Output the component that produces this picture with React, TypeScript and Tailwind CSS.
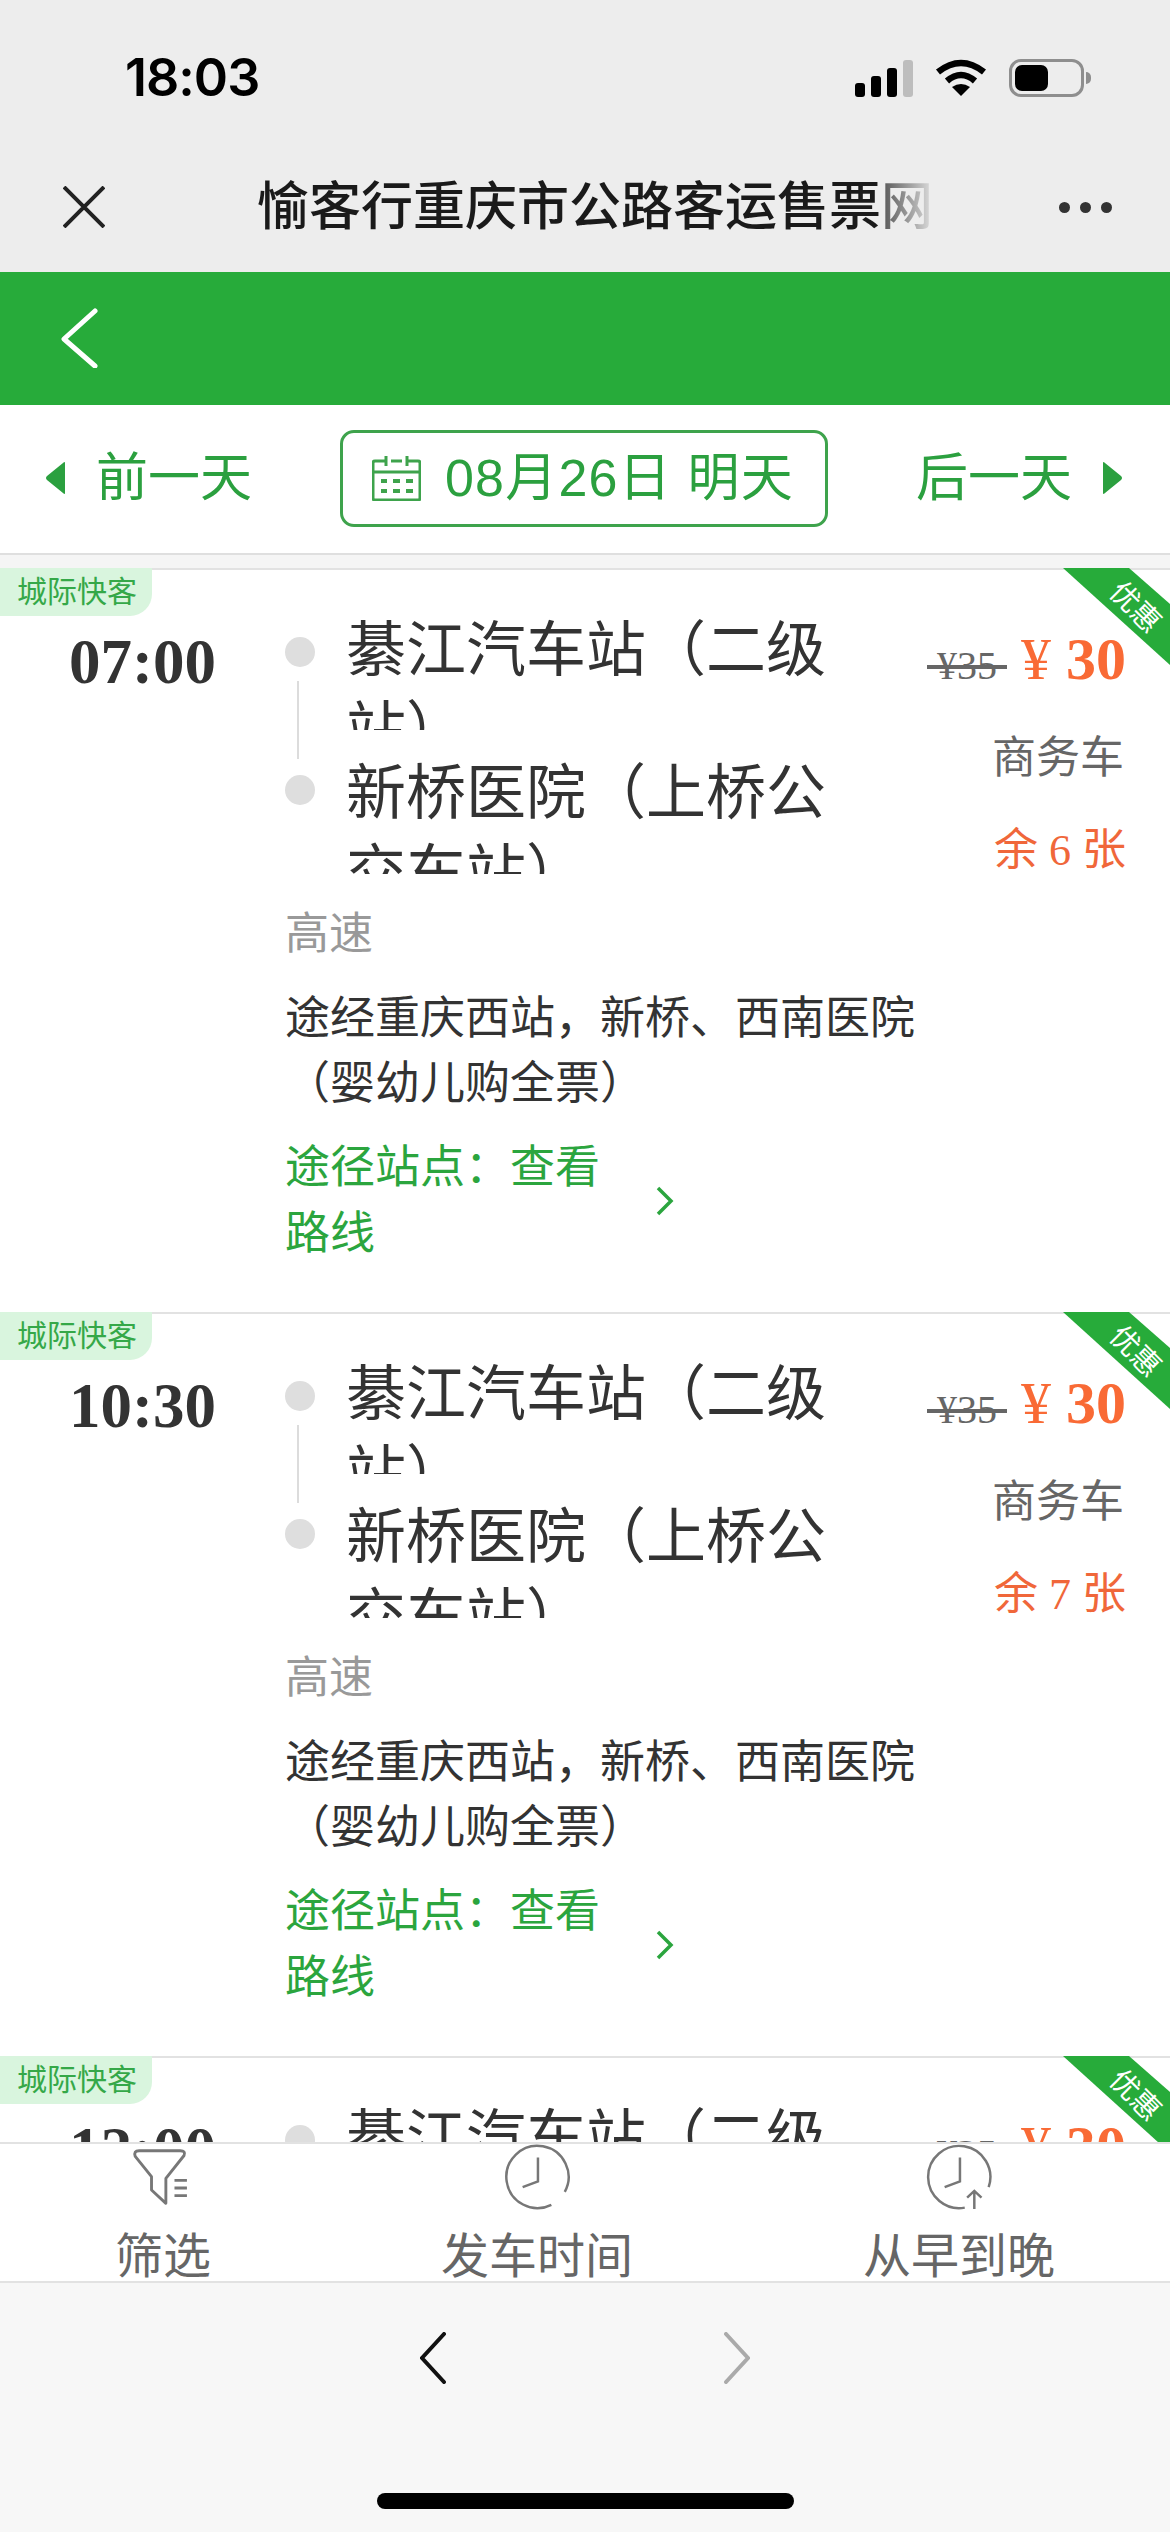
import React from "react";

const SANS = "[font-family:'Liberation_Sans','Noto_Sans_CJK_SC',sans-serif]";

type Trip = { time: string; left: number };

const trips: Trip[] = [
  { time: "07:00", left: 6 },
  { time: "10:30", left: 7 },
  { time: "12:00", left: 5 },
];

const FilterIcon = () => (
  <svg width="70" height="70" viewBox="0 0 70 70" fill="none" stroke="#777" strokeWidth="3">
    <path d="M10 7H53Q59 7 57 12L38 36V62L23 48V34L6 13Q4 7 10 7Z" strokeLinejoin="round" />
    <path d="M47 38H60M47 46H60M47 54H60" />
  </svg>
);

const ClockIcon = () => (
  <svg width="70" height="70" viewBox="0 0 70 70" fill="none" stroke="#777" strokeWidth="2.6">
    <path d="M64 50A32.5 32.5 0 1 0 50 63.5" />
    <path d="M36 14V39L20 45" />
  </svg>
);

const ClockUpIcon = () => (
  <svg width="70" height="70" viewBox="0 0 70 70" fill="none" stroke="#777" strokeWidth="2.6">
    <path d="M66 45A32.5 32.5 0 1 0 41 66.5" />
    <path d="M36 14V39L20 45" />
    <path d="M51 49V68M43.5 56L51 49L58.5 56" />
  </svg>
);

const StatusBar = () => (
  <div className="flex h-[156px] items-center justify-between pl-[125px] pr-[79px]">
    <span className="[font-family:'Inter',sans-serif] text-[52px] font-semibold leading-none tracking-[-1px] text-black">
      18:03
    </span>
    <div className="flex items-center">
      <div className="flex h-[38px] items-end gap-[6px]">
        <div className="h-[14px] w-[10px] rounded-[3px] bg-black" />
        <div className="h-[21px] w-[10px] rounded-[3px] bg-black" />
        <div className="h-[29px] w-[10px] rounded-[3px] bg-black" />
        <div className="h-[37px] w-[10px] rounded-[3px] bg-[#bdbdbd]" />
      </div>
      <svg className="ml-[22px]" width="52" height="38" viewBox="0 0 52 38" fill="none" stroke="#000">
        <path d="M3 13Q26 -5 49 13" strokeWidth="6.5" />
        <path d="M12 22Q26 10 40 22" strokeWidth="6.5" />
        <path d="M26 37L17 28Q26 22 35 28Z" fill="#000" stroke="none" />
      </svg>
      <div className="ml-[22px] h-[38px] w-[75px] rounded-[12px] border-[3px] border-[#8e8e8e] p-[3px]">
        <div className="h-full w-[33px] rounded-[7px] bg-black" />
      </div>
      <div className="ml-[2px] h-[12px] w-[5px] rounded-r-full bg-[#8e8e8e]" />
    </div>
  </div>
);

const NavBar = () => (
  <div className="flex h-[116px] items-center pb-[14px] pl-[63px] pr-[58px]">
    <svg width="42" height="42" viewBox="0 0 42 42" fill="none" stroke="#222" strokeWidth="4">
      <path d="M1 1L41 41M41 1L1 41" />
    </svg>
    <h1 className="ml-[152px] whitespace-nowrap text-[52px] font-medium leading-none text-[#1a1a1a]">
      愉客行重庆市公路客运售票
      <span className="bg-gradient-to-r from-[#555555] to-[#e0e0e0] bg-clip-text text-transparent">网</span>
    </h1>
    <div className="ml-auto flex gap-[10px]">
      <div className="size-[11px] rounded-full bg-[#333]" />
      <div className="size-[11px] rounded-full bg-[#333]" />
      <div className="size-[11px] rounded-full bg-[#333]" />
    </div>
  </div>
);

const GreenHeader = () => (
  <div className="flex h-[133px] items-center bg-[#27ab3a] pb-[2px] pl-[61px]">
    <svg width="38" height="60" viewBox="0 0 38 60" fill="none" stroke="#fff" strokeWidth="5" strokeLinecap="round" strokeLinejoin="round">
      <path d="M34 3L3 31L34 58" />
    </svg>
  </div>
);

const DateBar = () => (
  <div className="flex h-[150px] items-center justify-between border-b-2 border-[#dfdfdf] bg-white pb-[2px] pl-[45px] pr-[47px] text-[52px] leading-none text-[#2ba03f]">
    <div className="flex items-center gap-[30px]">
      <svg width="21" height="34" viewBox="0 0 21 34" fill="#2ba03f">
        <path d="M20 2V32Q20 34 18 32L2 19Q0 17 2 15L18 2Q20 0 20 2Z" />
      </svg>
      <span>前一天</span>
    </div>
    <div className="flex h-[97px] w-[488px] items-center gap-[24px] rounded-[14px] border-[3px] border-[#3ea34c] pl-[29px]">
      <svg width="49" height="46" viewBox="0 0 49 46" fill="none" stroke="#3ea34c" strokeWidth="3">
        <path d="M13 6H3Q1 6 1 8V43Q1 45 3 45H46Q48 45 48 43V8Q48 6 46 6H36M19 6H30" />
        <path d="M14 1V11M35 1V11M1 17H48" />
        <path d="M9 26H15M21 26H28M34 26H41M9 36H15M21 36H28M34 36H41" strokeWidth="4" />
      </svg>
      <span className="whitespace-pre tracking-[1.2px]">08月26日 明天</span>
    </div>
    <div className="flex items-center gap-[30px]">
      <span>后一天</span>
      <svg width="21" height="34" viewBox="0 0 21 34" fill="#2ba03f">
        <path d="M1 2V32Q1 34 3 32L19 19Q21 17 19 15L3 2Q1 0 1 2Z" />
      </svg>
    </div>
  </div>
);

const TripCard = ({ trip }: { trip: Trip }) => (
  <div className="relative h-[744px] border-t-2 border-[#e2e2e2] bg-white">
    <div className="absolute left-0 top-[-2px] flex h-[48px] w-[152px] items-center rounded-br-[22px] bg-[#d9f5de] pl-[17px] text-[30px] leading-none text-[#35a848]">
      城际快客
    </div>
    <svg className="absolute right-0 top-[-2px]" width="107" height="97" viewBox="0 0 107 97" fill="#27ab3a">
      <path d="M0 0H66L107 36V97Z" />
    </svg>
    <span className="absolute right-[6px] top-[23px] rotate-45 text-[29px] leading-none text-white">优惠</span>

    <div className="flex pt-[38px]">
      <div className="w-[285px] pl-[69px] pt-[23px] [font-family:'Liberation_Serif',serif] text-[63px] font-bold leading-[62px] text-[#333]">
        {trip.time}
      </div>

      <div className="w-[600px]">
        <div className="relative flex flex-col gap-[21px]">
          <div className="absolute left-[12px] top-[73px] h-[78px] w-[2px] bg-[#dcdcdc]" />
          <div className="flex">
            <div className="mt-[29px] size-[30px] shrink-0 rounded-full bg-[#dedede]" />
            <div className="ml-[31px] h-[122px] w-[500px] overflow-hidden pt-[3px] text-[60px] leading-[80px] text-[#333]">
              綦江汽车站（二级站）
            </div>
          </div>
          <div className="flex">
            <div className="mt-[24px] size-[30px] shrink-0 rounded-full bg-[#dedede]" />
            <div className="ml-[31px] h-[123px] w-[500px] overflow-hidden pt-[3px] text-[60px] leading-[80px] text-[#333]">
              新桥医院（上桥公交车站）
            </div>
          </div>
        </div>

        <div className="mt-[27px] text-[44px] leading-[66px] text-[#999]">高速</div>
        <div className="mt-[19px] w-[650px] text-[45px] leading-[65px] text-[#333]">
          途经重庆西站，新桥、西南医院（婴幼儿购全票）
        </div>
        <div className="mt-[19px] flex items-center">
          <div className="w-[340px] text-[45px] leading-[66px] text-[#2ba53e]">途径站点：查看路线</div>
          <svg className="ml-[30px]" width="20" height="30" viewBox="0 0 20 30" fill="none" stroke="#2ba53e" strokeWidth="3.5">
            <path d="M3 2L16 15L3 28" />
          </svg>
        </div>
      </div>

      <div className="flex flex-1 flex-col items-end pr-[44px]">
        <div className="mt-[16px] flex items-baseline whitespace-pre [font-family:'Liberation_Serif',serif] leading-[70px] text-[#f96a35]">
          <span className="text-[40px] text-[#666] line-through"> ¥35 </span>
          <span className="ml-[14px] text-[60px]">¥ </span>
          <span className="text-[60px] font-bold">30</span>
        </div>
      </div>
    </div>

    <div className="absolute right-[46px] top-[158px] text-right text-[44px] leading-[60px] text-[#666]">商务车</div>
    <div className="absolute right-[44px] top-[251px] whitespace-pre text-right [font-family:'Liberation_Serif','Noto_Sans_CJK_SC',serif] text-[44px] leading-[60px] text-[#f0673a]">
      余 {trip.left} 张
    </div>
  </div>
);

const SortItem = ({ icon, label }: { icon: React.ReactNode; label: string }) => (
  <div className="flex flex-col items-center">
    {icon}
    <span className="mt-[22px] text-[48px] leading-[48px] text-[#666]">{label}</span>
  </div>
);

const SortBar = () => (
  <div className="flex h-[141px] shrink-0 justify-around overflow-hidden border-y-2 border-[#e2e2e2] bg-white">
    <SortItem icon={<FilterIcon />} label="筛选" />
    <SortItem icon={<ClockIcon />} label="发车时间" />
    <SortItem icon={<ClockUpIcon />} label="从早到晚" />
  </div>
);

const BrowserBar = () => (
  <div className="flex h-[249px] shrink-0 flex-col items-center bg-[#f7f7f7]">
    <div className="mt-[49px] flex w-[330px] justify-between">
      <svg width="26" height="52" viewBox="0 0 26 52" fill="none" stroke="#111" strokeWidth="4" strokeLinecap="round">
        <path d="M24 2L2 26L24 50" />
      </svg>
      <svg width="26" height="52" viewBox="0 0 26 52" fill="none" stroke="#aaa" strokeWidth="4" strokeLinecap="round">
        <path d="M2 2L24 26L2 50" />
      </svg>
    </div>
    <div className="mt-[109px] h-[16px] w-[417px] rounded-full bg-black" />
  </div>
);

export default function App() {
  return (
    <div className={`flex h-[2532px] w-[1170px] flex-col overflow-hidden bg-[#ededed] ${SANS}`}>
      <StatusBar />
      <NavBar />
      <GreenHeader />
      <DateBar />
      <main className="min-h-0 flex-1 overflow-hidden bg-[#f5f5f5] pt-[13px]">
        {trips.map((t) => (
          <TripCard key={t.time} trip={t} />
        ))}
      </main>
      <SortBar />
      <BrowserBar />
    </div>
  );
}
